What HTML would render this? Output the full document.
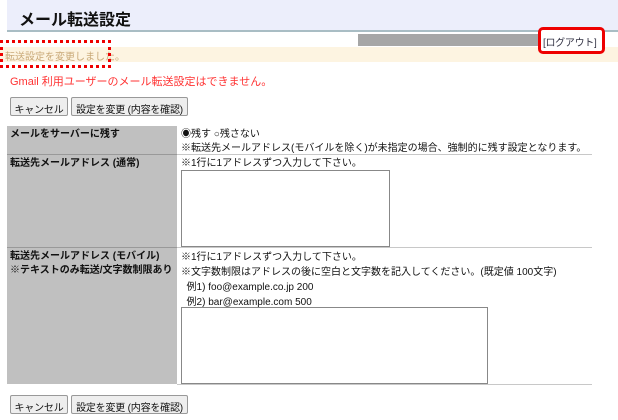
<!DOCTYPE html>
<html><head><meta charset="utf-8"><style>
*{box-sizing:border-box;margin:0;padding:0}
body{width:618px;height:420px;background:#fff;font-family:"Liberation Sans","Noto Sans CJK JP",sans-serif;font-size:10px;color:#111;position:relative;overflow:hidden;white-space:nowrap}
.hdr{position:absolute;left:7px;top:0;width:611px;height:32px;background:#eceefb;border-bottom:2px solid #a9bdc4}
.hdr h1{position:absolute;left:12px;top:6px;font-size:16px;font-weight:bold;color:#111}
.bar{position:absolute;left:358px;top:34px;width:182px;height:12px;background:#a6a6a6}
.logout{position:absolute;left:538px;top:27px;width:67px;height:27px;border:3px solid #e00;border-radius:5px;background:#fff;color:#334;font-size:10px;letter-spacing:-0.3px;padding:4px 0 0 2px;z-index:3}
.msg{position:absolute;left:0;top:47px;width:618px;height:15px;background:#fdf4e1;color:#c9a978;font-size:10px;padding:1px 0 0 5px}
.dot{position:absolute;left:0;top:40px;width:111px;height:28px;border:3px dotted #e00;z-index:3}
.err{position:absolute;left:10px;top:73px;color:#f33;font-size:11px}
.btn{position:absolute;height:19px;border:1px solid #999;background:#eee;font-size:10px;padding:3px 0 0;text-align:center;border-radius:2px;letter-spacing:-0.2px}
.cell{position:absolute}
.l{left:7px;width:170px;background:#c0c0c0;font-weight:bold;padding:2px 3px;line-height:14px}
.r{left:177px;width:415px;padding:2px 4px;line-height:14px;border-bottom:1px solid #c8c8c8}
.ta{position:absolute;border:1px solid #888;background:#fff}
</style></head><body>
<div class="hdr"><h1>メール転送設定</h1></div>
<div class="bar"></div>
<div class="msg">転送設定を変更しました。</div>
<div class="logout">[ログアウト]</div>
<div class="dot"></div>
<div class="err">Gmail 利用ユーザーのメール転送設定はできません。</div>
<div class="btn" style="left:10px;top:97px;width:58px">キャンセル</div>
<div class="btn" style="left:71px;top:97px;width:117px">設定を変更 (内容を確認)</div>

<div class="cell l" style="top:126px;height:29px;border-bottom:1px solid #999">メールをサーバーに残す</div>
<div class="cell r" style="top:126px;height:29px">◉残す ○残さない<br>※転送先メールアドレス(モバイルを除く)が未指定の場合、強制的に残す設定となります。</div>
<div class="cell l" style="top:155px;height:93px;border-bottom:1px solid #999">転送先メールアドレス (通常)</div>
<div class="cell r" style="top:155px;height:93px">※1行に1アドレスずつ入力して下さい。</div>
<div class="ta" style="left:181px;top:170px;width:209px;height:77px"></div>
<div class="cell l" style="top:248px;height:136px">転送先メールアドレス (モバイル)<br>※テキストのみ転送/文字数制限あり</div>
<div class="cell r" style="top:248px;height:137px;line-height:15px">※1行に1アドレスずつ入力して下さい。<br>※文字数制限はアドレスの後に空白と文字数を記入してください。(既定値 100文字)<br>&nbsp;&nbsp;例1) foo@example.co.jp 200<br>&nbsp;&nbsp;例2) bar@example.com 500</div>
<div class="ta" style="left:181px;top:307px;width:307px;height:77px"></div>

<div class="btn" style="left:10px;top:395px;width:58px">キャンセル</div>
<div class="btn" style="left:71px;top:395px;width:117px">設定を変更 (内容を確認)</div>
</body></html>
